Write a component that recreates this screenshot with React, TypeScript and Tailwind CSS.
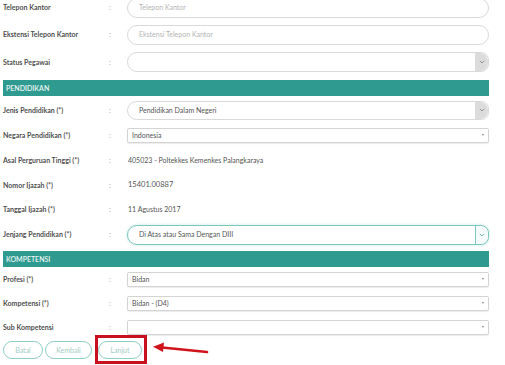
import { ReactNode } from "react";

const FONT = { fontFamily: "Lato, 'Open Sans', sans-serif" };

function Row({ label, h, children }: { label: string; h: string; children: ReactNode }) {
  return (
    <div className={`flex items-center ${h}`}>
      <div className="w-[109px] shrink-0 pl-[3px] text-[7px] font-bold text-[#505050]">{label}</div>
      <div className="w-[18px] shrink-0 text-[7px] text-[#999]">:</div>
      <div className="w-[362px] shrink-0">{children}</div>
    </div>
  );
}

function PillInput({ placeholder }: { placeholder: string }) {
  return (
    <div className="flex h-[20px] items-center rounded-[10px] border border-[#d9d9d9] bg-white pl-[11px] text-[7px] text-[#b5b5b5]">
      {placeholder}
    </div>
  );
}

function Chevron({ color }: { color: string }) {
  return (
    <svg width="6" height="4" viewBox="0 0 6 4">
      <path d="M0.8 0.8 L3 3 L5.2 0.8" fill="none" stroke={color} strokeWidth="0.9" />
    </svg>
  );
}

function PillSelect({ value, h, focus }: { value?: string; h: string; focus?: boolean }) {
  return (
    <div
      className={`flex ${h} items-stretch overflow-hidden rounded-l-[10px] rounded-r-[8px] border ${
        focus ? "border-[#7cc7bd] shadow-[0_0_3px_#bfe6e0]" : "border-[#d9d9d9]"
      } bg-white`}
    >
      <div className="flex flex-1 items-center pl-[11px] text-[7px] text-[#555]">{value}</div>
      <div
        className={`flex w-[13px] items-center justify-center rounded-r-[8px] ${
          focus ? "border-l border-[#7cc7bd] bg-[#f4fbfa]" : "bg-[#dcdcdc]"
        }`}
      >
        <Chevron color={focus ? "#6bb8ae" : "#8a8a8a"} />
      </div>
    </div>
  );
}

function Select2({ value }: { value?: string }) {
  return (
    <div className="flex h-[15px] items-center rounded-[2px] border border-[#d4d4d4] bg-white pl-[4px] pr-[3px] text-[7px] text-[#555] shadow-[0_1px_1px_#ececec]">
      <span className="flex-1">{value}</span>
      <span className="mr-[1px] h-0 w-0 border-x-[1.5px] border-t-[2px] border-x-transparent border-t-[#888]" />
    </div>
  );
}

function Header({ title }: { title: string }) {
  return (
    <div className="ml-[3px] flex h-[16px] w-[486px] items-center bg-[#2f9a8f] pl-[3px] text-[7px] font-semibold text-white/90">
      {title}
    </div>
  );
}

function Btn({ label }: { label: string }) {
  return (
    <div className="flex h-[18px] items-center justify-center rounded-[9px] border border-[#8fcfc4] bg-white text-[7px] text-[#9fcdc6]">
      {label}
    </div>
  );
}

export default function App() {
  return (
    <div className="relative h-[365px] w-[505px] overflow-hidden bg-white" style={FONT}>
      <div className="-mt-[6px] flex flex-col">
        <Row label="Telepon Kantor" h="h-[27px]">
          <PillInput placeholder="Telepon Kantor" />
        </Row>
        <Row label="Ekstensi Telepon Kantor" h="h-[27px]">
          <PillInput placeholder="Ekstensi Telepon Kantor" />
        </Row>
        <Row label="Status Pegawai" h="h-[28px]">
          <PillSelect h="h-[20px]" />
        </Row>
        <div className="mt-[4px]">
          <Header title="PENDIDIKAN" />
        </div>
        <Row label="Jenis Pendidikan (*)" h="h-[28px]">
          <PillSelect h="h-[19px]" value="Pendidikan Dalam Negeri" />
        </Row>
        <Row label="Negara Pendidikan (*)" h="h-[22px]">
          <Select2 value="Indonesia" />
        </Row>
        <Row label="Asal Perguruan Tinggi (*)" h="h-[28px]">
          <div className="pl-[1px] text-[7px] text-[#555]">405023 - Poltekkes Kemenkes Palangkaraya</div>
        </Row>
        <Row label="Nomor Ijazah (*)" h="h-[22px]">
          <div className="pl-[1px] text-[7.5px] text-[#555]">15401.00887</div>
        </Row>
        <Row label="Tanggal Ijazah (*)" h="h-[26px]">
          <div className="pl-[1px] text-[7px] text-[#555]">11 Agustus 2017</div>
        </Row>
        <Row label="Jenjang Pendidikan (*)" h="h-[25px]">
          <PillSelect h="h-[20px]" value="Di Atas atau Sama Dengan DIII" focus />
        </Row>
        <div className="mt-[4px]">
          <Header title="KOMPETENSI" />
        </div>
        <Row label="Profesi (*)" h="h-[24px]">
          <Select2 value="Bidan" />
        </Row>
        <Row label="Kompetensi (*)" h="h-[24px]">
          <Select2 value="Bidan - (D4)" />
        </Row>
        <Row label="Sub Kompetensi" h="h-[24px]">
          <Select2 />
        </Row>
        <div className="mt-[2px] flex items-center pl-[3px]">
          <div className="w-[40px]">
            <Btn label="Batal" />
          </div>
          <div className="ml-[2px] w-[47px]">
            <Btn label="Kembali" />
          </div>
          <div className="relative ml-[6px] w-[44px]">
            <Btn label="Lanjut" />
            <span className="absolute -left-[3px] -right-[5px] -top-[6px] -bottom-[5px] border-[3px] border-[#c8101e]" />
          </div>
        </div>
      </div>
      <svg className="absolute left-[150px] top-[340px]" width="62" height="18" viewBox="0 0 62 18">
        <path d="M57 12 L12 7.5" stroke="#d0141c" strokeWidth="2.6" strokeLinecap="round" />
        <path d="M3 6.8 L14 2.5 L13 12 Z" fill="#d0141c" />
      </svg>
    </div>
  );
}
